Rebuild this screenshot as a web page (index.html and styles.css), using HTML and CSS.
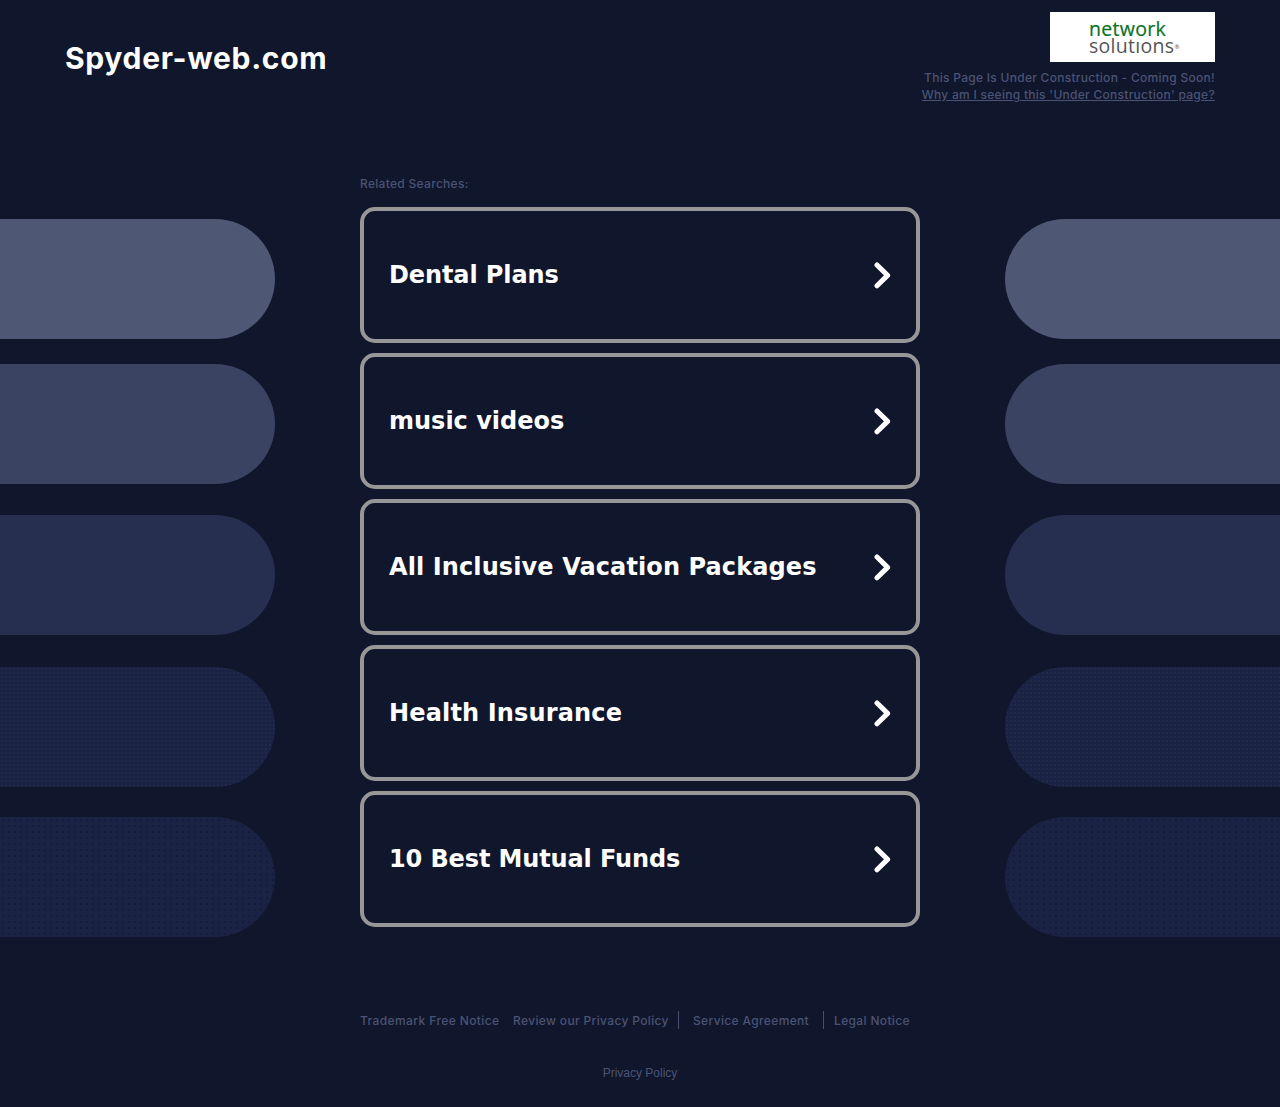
FILE: index.html
```html
<!DOCTYPE html>
<html lang="en">
<head>
<meta charset="utf-8">
<title>Spyder-web.com</title>
<link rel="stylesheet" href="styles.css">
</head>
<body>
<svg class="defs" width="0" height="0" aria-hidden="true"><symbol id="chevron" viewBox="0 0 18 28"><path d="M4 4 14.6 14.4 4 24.8" fill="none" stroke="#fff" stroke-width="5" stroke-linecap="round" stroke-linejoin="round"/></symbol></svg>
<header class="header">
  <h1 class="domain"><span>Spyder-web.com</span></h1>
  <div class="sponsor">
    <div class="logo">
      <span class="logo-top">network</span>
      <span class="logo-bottom">solut&#305;ons<sup>®</sup></span>
    </div>
    <span class="notice">This Page Is Under Construction - Coming Soon!</span>
    <a class="why" href="#">Why am I seeing this 'Under Construction' page?</a>
  </div>
</header>
<div class="content">
  <div class="pills left"><i class="p1"></i><i class="p2"></i><i class="p3"></i><i class="p4"></i><i class="p5"></i></div>
  <main class="main">
    <p class="related"><span>Related Searches:</span></p>
    <nav class="links">
      <a href="#"><span class="t1">Dental Plans</span><svg width="18" height="28"><use href="#chevron"/></svg></a>
      <a href="#"><span class="t2">music videos</span><svg width="18" height="28"><use href="#chevron"/></svg></a>
      <a href="#"><span class="t3">All Inclusive Vacation Packages</span><svg width="18" height="28"><use href="#chevron"/></svg></a>
      <a href="#"><span class="t4">Health Insurance</span><svg width="18" height="28"><use href="#chevron"/></svg></a>
      <a href="#"><span class="t5">10 Best Mutual Funds</span><svg width="18" height="28"><use href="#chevron"/></svg></a>
    </nav>
    <div class="legal">
      <a class="f1" href="#">Trademark Free Notice</a>
      <a class="f2" href="#">Review our Privacy Policy</a>
      <a class="f3" href="#">Service Agreement</a>
      <a class="f4" href="#">Legal Notice</a>
    </div>
    <a class="privacy" href="#">Privacy Policy</a>
  </main>
  <div class="pills right"><i class="p1"></i><i class="p2"></i><i class="p3"></i><i class="p4"></i><i class="p5"></i></div>
</div>
</body>
</html>
```
FILE: styles.css
```css
* { box-sizing: border-box; }
body { margin: 0; height: 1107px; overflow: hidden; background: #10162b; color: #4b5375; font: 500 12px/17px Inter, sans-serif; }
a { color: inherit; text-decoration: none; }
.defs { display: block; }
.header { height: 160px; padding: 12px 65px 0; display: flex; justify-content: space-between; align-items: flex-start; }
.domain { margin: 26px 0 0; font: 700 30px/40px Inter, sans-serif; color: #fff; letter-spacing: 0.68px; }
.sponsor { display: flex; flex-direction: column; align-items: flex-end; }
.logo { width: 165px; height: 50px; padding: 8px 0 0 39px; margin-bottom: 7px; background: #fff; display: flex; flex-direction: column; font: 19.5px/17px "Open Sans", sans-serif; }
.logo-top { color: #0a7124; letter-spacing: 0.3px; white-space: nowrap; -webkit-text-stroke: 0.2px; }
.logo-bottom { color: #555; letter-spacing: 0.3px; white-space: nowrap; }
.logo sup { font-size: 6px; line-height: 1px; vertical-align: 4px; }
.notice, .why { height: 17px; letter-spacing: 0.28px; }
.why { text-decoration: underline; }
.content { display: grid; grid-template-columns: 275px 560px 275px; justify-content: space-between; align-items: start; }
.pills { display: flex; flex-direction: column; padding-top: 59.4px; }
.pills i { height: 120px; border-radius: 0 60px 60px 0; }
.right i { border-radius: 60px 0 0 60px; }
.p1 { background: #4e5773; margin-bottom: 24.6px; }
.p2 { background: #3b4362; margin-bottom: 31.4px; }
.p3 { background: #262f4f; margin-bottom: 31.6px; }
.p4 { background: #1a2343 radial-gradient(circle, #202a48 0.7px, transparent 1px) 0 0 / 4px 4px; margin-bottom: 30px; }
.p5 { background: #1a2343 radial-gradient(circle, #141c38 0.7px, transparent 1px) 0 0 / 6px 6px; }
.pills .p1, .pills .p2, .pills .p3, .pills .p4, .pills .p5 { flex: none; }
.main { display: flex; flex-direction: column; }
.related { margin: 15px 0 15px; height: 17px; letter-spacing: 0.3px; }
.links { display: grid; grid-auto-rows: 136px; row-gap: 10px; }
.links a { border: 4px solid #979797; border-radius: 15px; padding: 0 25px; display: flex; align-items: center; justify-content: space-between; color: #fff; font: 700 24px/30px "DejaVu Sans", sans-serif; }
.t1 { letter-spacing: -0.1px; }
.t3 { letter-spacing: 0.1px; }
.t4 { letter-spacing: 0.15px; }
.t5 { letter-spacing: -0.12px; }
.legal { display: flex; height: 18px; margin-top: 84px; line-height: 19px; letter-spacing: 0.35px; white-space: nowrap; }
.f1 { width: 153px; letter-spacing: 0.4px; }
.f2 { width: 166px; border-right: 1px solid #474f70; }
.f3 { width: 145px; padding-left: 14px; border-right: 1px solid #474f70; }
.f4 { padding-left: 10px; }
.privacy { align-self: center; margin-top: 36px; font: 12px/17px "Liberation Sans", Arial, sans-serif; }
```
